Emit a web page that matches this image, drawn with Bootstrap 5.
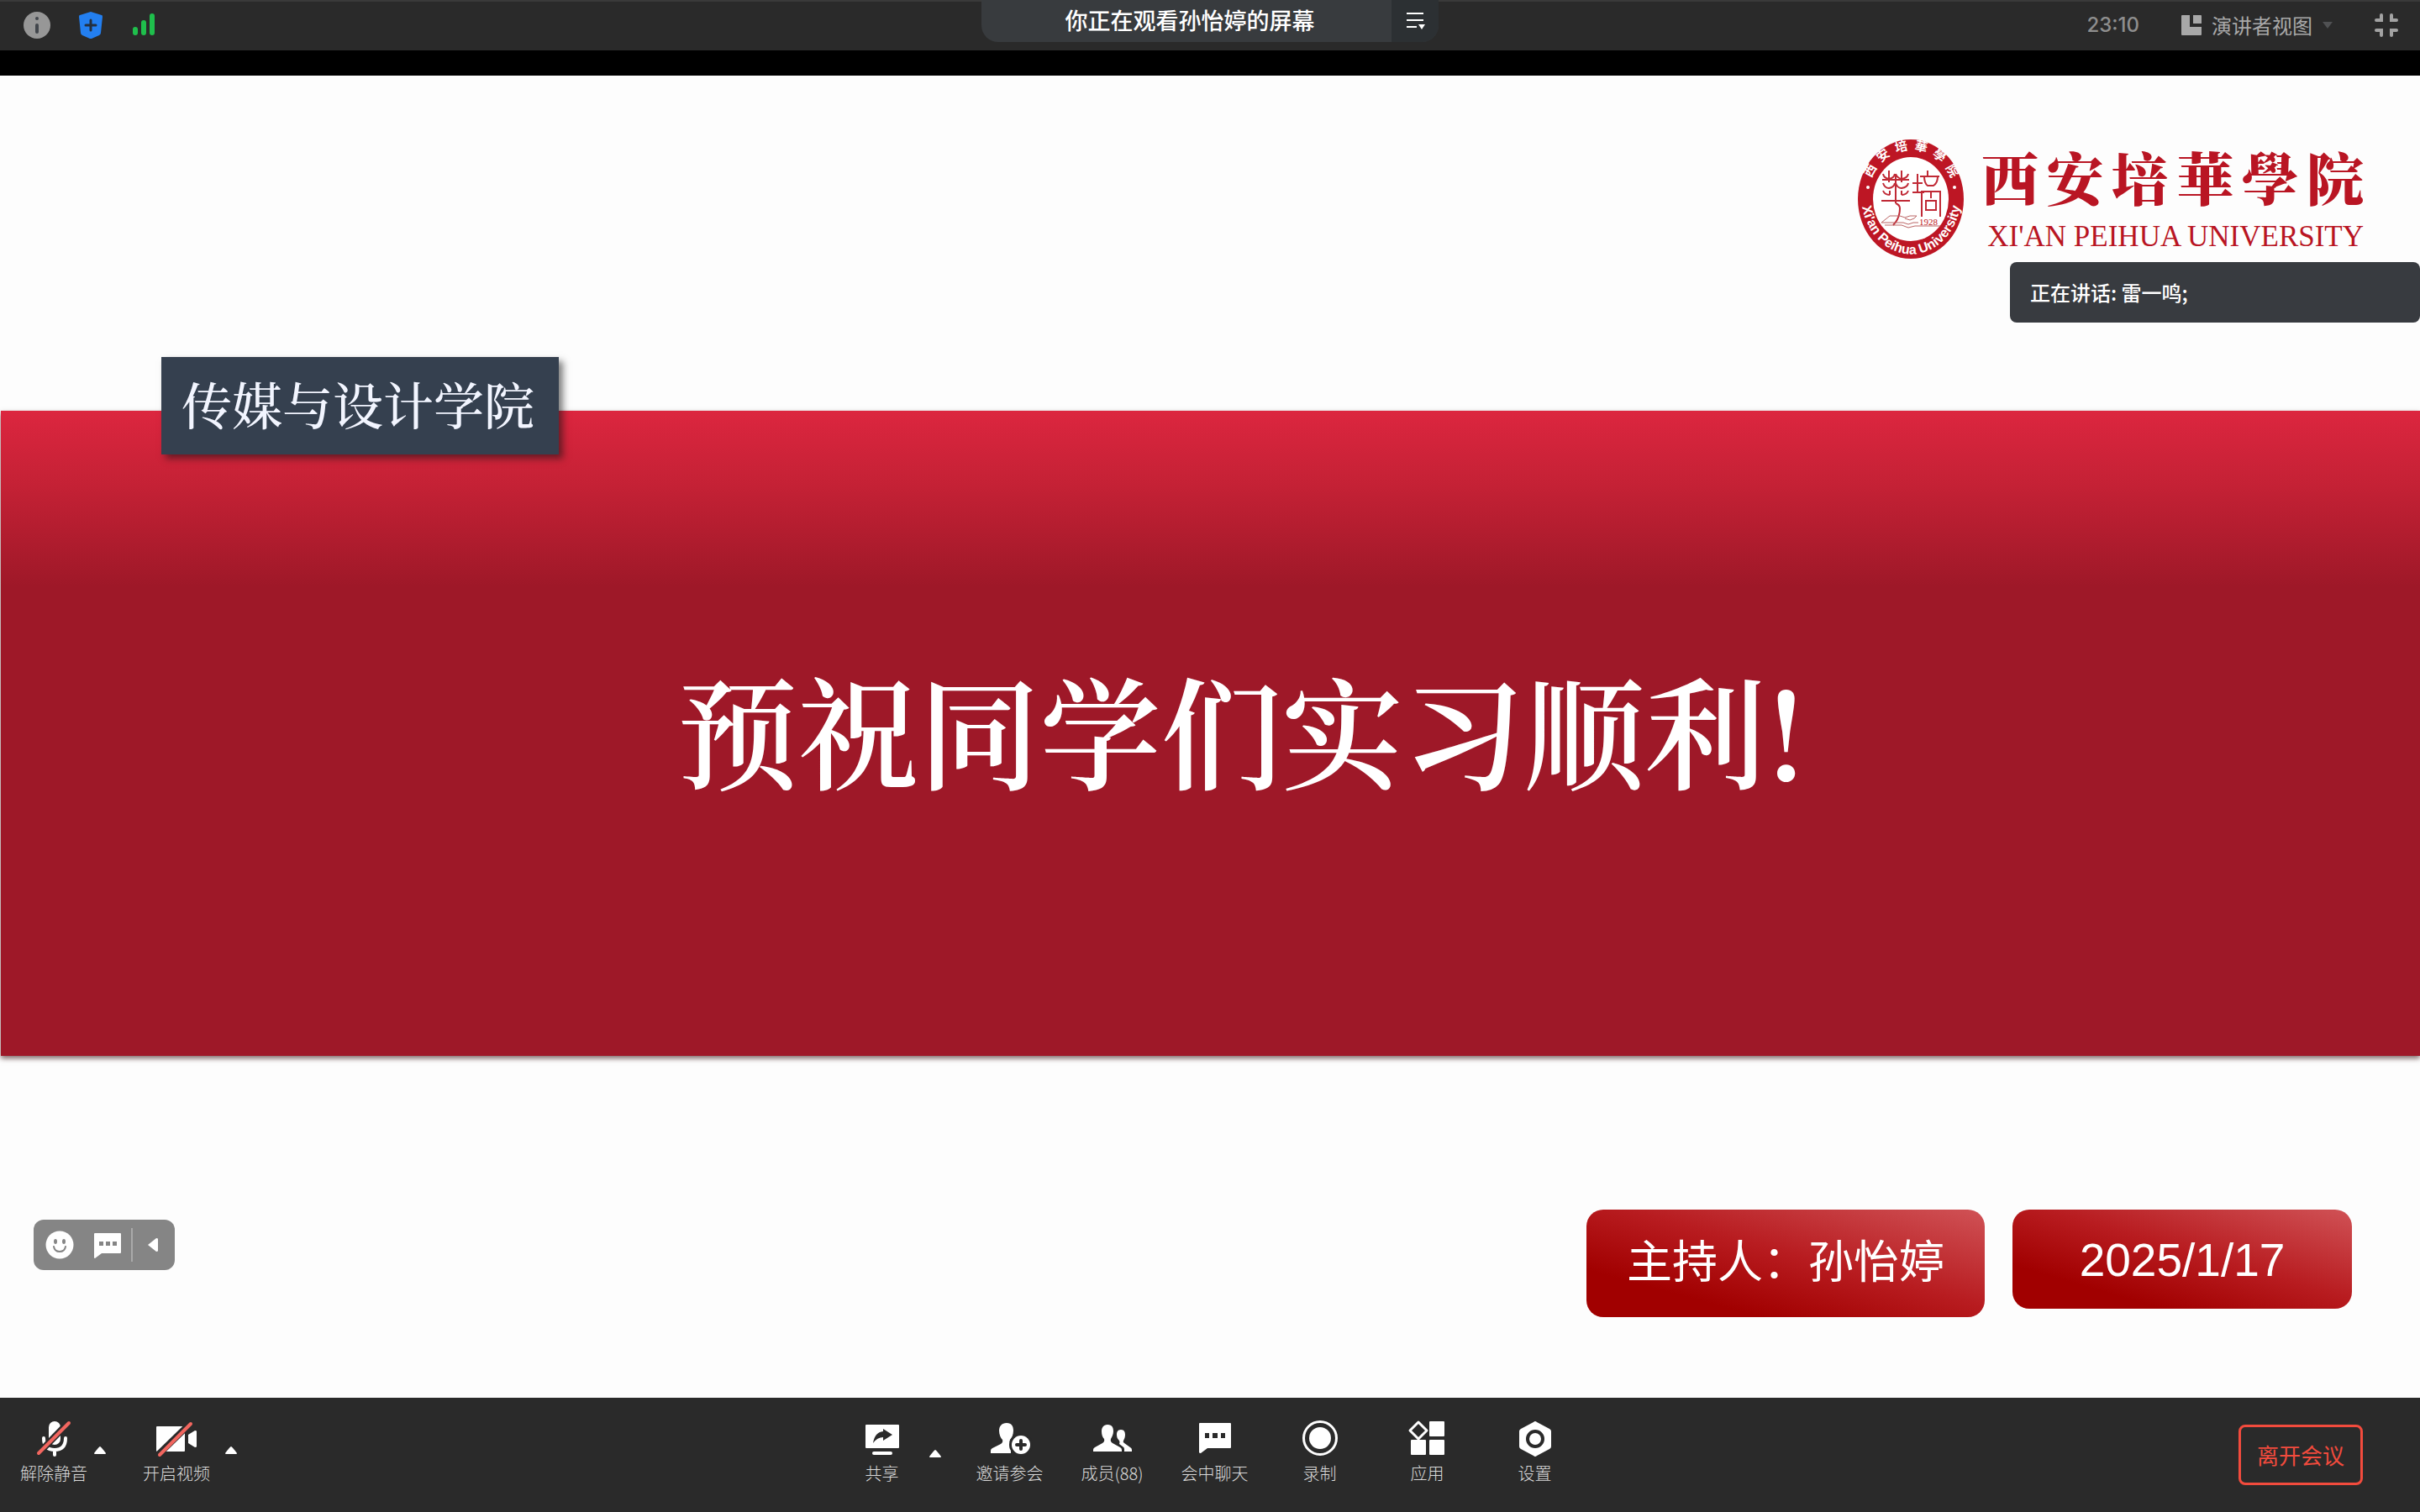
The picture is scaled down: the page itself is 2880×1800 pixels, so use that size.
<!DOCTYPE html>
<html lang="zh-CN">
<head>
<meta charset="utf-8">
<meta name="viewport" content="width=device-width, initial-scale=1">
<title>会议</title>
<link href="https://cdn.jsdelivr.net/npm/bootstrap@5.3.0/dist/css/bootstrap.min.css" rel="stylesheet">
<style>
  body { font-family: "Noto Sans CJK SC", sans-serif; background: #000; color: #fff; }
  svg { display: block; flex: none; overflow: visible; }
  button { background: none; border: 0; padding: 0; color: inherit; }

  .topbar { height: 60px; background: #2a2a2a; border-top: 2px solid #3a3a3a; padding: 0 26px 2px 28px; font-size: 24px; line-height: 32px; }
  .status-icons { gap: 34px; }
  .top-right { gap: 50px; color: #a8a8a8; }
  .clock { font-family: Inter, sans-serif; font-weight: 500; color: #8e8e8e; }
  .view-switch { gap: 12px; }
  .watching { top: -2px; left: 50%; transform: translateX(-50%); height: 50px; border-radius: 0 0 20px 20px; background: #383b3e; overflow: hidden; font-size: 27px; font-weight: 500; line-height: 48px; }
  .watching-name { width: 488px; padding-left: 8px; }
  .watching-menu { width: 56px; background: #2c3033; }

  .slide { margin-top: 30px; padding-top: 76px; background: #fdfdfd; }
  .school { padding-right: 67px; gap: 20px; color: #b91523; }
  .school-cn { font-family: "Noto Serif CJK SC", "Noto Sans CJK SC", serif; font-size: 68px; font-weight: 900; line-height: 80px; }
  .school-en { margin-top: 12px; font-family: "Liberation Serif", serif; font-size: 35px; line-height: 40px; text-align: right; }
  .school-names { width: 455px; padding-top: 4px; }
  .speaking { top: 222px; right: 0; width: 488px; height: 72px; padding-left: 24px; border-radius: 8px; background: #383b40; font-size: 24px; font-weight: 500; }
  .band { margin: 181px 0 0 1px; height: 768px; padding-left: 74px; background: linear-gradient(#dc263f 0, #c42135 90px, #9e1828 210px); box-shadow: 0 3px 6px rgba(40, 0, 0, .6); }
  .band h1 { font-family: "Noto Serif CJK SC", "Noto Sans CJK SC", serif; font-size: 144px; font-weight: 600; line-height: 184px; margin: 0 0 12px; }
  .college { top: -64px; left: 191px; width: 473px; height: 116px; padding: 0 0 6px 24px; background: #35404f; box-shadow: 5px 5px 8px rgba(20, 20, 20, .55); font-family: "Noto Serif CJK SC", "Noto Sans CJK SC", serif; font-size: 60px; font-weight: 500; color: #f2f5ff; }
  .plates { padding: 183px 81px 0 0; gap: 33px; font-size: 54px; line-height: 64px; }
  .plate { border-radius: 20px; background: linear-gradient(to top right, #a10000 22%, #b81c20 55%, #d05256 100%); }
  .plate-host { width: 474px; height: 128px; padding-bottom: 10px; }
  .plate-date { width: 404px; height: 118px; padding-top: 2px; font-family: "Liberation Sans", sans-serif; font-size: 55px; }
  .quick { left: 40px; bottom: 152px; height: 60px; border-radius: 12px; background: #858585; padding: 0 20px 0 14px; }
  .quick-chat { margin: 0 12px 0 24px; }
  .quick-line { width: 2px; height: 40px; margin-right: 18px; background: #a9a9a9; }

  .toolbar { display: grid; grid-template-columns: 1fr auto 1fr; background: #2a2a2a; padding: 24px 28px 32px 24px; }
  .tool { min-width: 80px; font-size: 20px; font-weight: 300; line-height: 24px; color: #dadada; gap: 6px; }
  .tool-short { min-width: 86px; }
  .tools-left { gap: 44px; }
  .tools-mid { gap: 42px; }
  .tools-right { padding: 8px 40px 0 0; }
  .with-menu { gap: 13px; }
  .mic-group { gap: 8px; }
  .cam-group { gap: 18px; }
  .leave { width: 148px; height: 72px; padding-bottom: 2px; border: 3px solid #f24b3d; border-radius: 8px; color: #f24b3d; font-size: 26px; }
</style>
</head>
<body>
<div class="d-flex flex-column min-vh-100">

  <header class="topbar position-relative d-flex align-items-center justify-content-between">
    <div class="status-icons d-flex align-items-center">
      <button type="button" aria-label="会议信息"><svg width="32" height="32"><circle cx="16" cy="16" r="16" fill="#979797"/><circle cx="16" cy="8" r="2" fill="#42464c"/><rect x="14" y="14" width="4" height="12" rx="2" fill="#42464c"/></svg></button>
      <button type="button" aria-label="安全"><svg width="28" height="32"><path d="M14 0 27 4Q28 4 28 6L26 25Q26 27 24 28L15 32H13L4 28Q2 27 2 25L0 6Q0 4 1 4Z" fill="#237ff0"/><path d="M14 10v12M8 16h12" stroke="#24303f" stroke-width="3" stroke-linecap="round"/></svg></button>
      <button type="button" aria-label="网络状态"><svg width="30" height="32" fill="#1fbf4c"><rect x="2" y="18" width="6" height="10" rx="3"/><rect x="12" y="10" width="6" height="18" rx="3"/><rect x="22" y="2" width="6" height="26" rx="3"/></svg></button>
    </div>
    <div class="top-right d-flex align-items-center">
      <span class="clock">23:10</span>
      <button type="button" class="view-switch d-flex align-items-center">
        <svg width="24" height="24" fill="#a8a8a8"><path d="M1 0H10V14H24V23Q24 24 23 24H1Q0 24 0 23V1Q0 0 1 0Z"/><path d="M14 0h9q1 0 1 1v9H14z"/></svg>
        <span>演讲者视图</span>
        <svg width="12" height="8"><path d="M0 0H12L6 8Z" fill="#505153"/></svg>
      </button>
      <button type="button" aria-label="退出全屏"><svg width="28" height="28" fill="none" stroke="#a2a2a2" stroke-width="4" stroke-linecap="round"><path d="M2 8H8V2M20 2V8H26M2 20H8V26M20 26V20H26"/></svg></button>
    </div>
    <div class="watching position-absolute d-flex">
      <div class="watching-name text-center">你正在观看孙怡婷的屏幕</div>
      <button type="button" class="watching-menu d-flex align-items-center justify-content-center" aria-label="更多"><svg width="20" height="20"><path d="M0 1H20M0 9H20M0 17H12" stroke="#fff" stroke-width="2"/><path d="M14 14H22L18 20Z" fill="#fff"/></svg></button>
    </div>
  </header>

  <main class="slide position-relative flex-grow-1">
    <div class="school d-flex justify-content-end">
      <svg width="127" height="142" viewBox="0 0 127 142" role="img" aria-label="西安培华学院校徽">
        <defs>
          <path id="ringTop" d="M11 71A52 58 0 0 1 116 71"/>
          <path id="ringBottom" d="M4 66A59 70 0 0 0 123 66"/>
        </defs>
        <ellipse cx="63" cy="71" rx="63" ry="71" fill="#bd1624"/>
        <ellipse cx="63" cy="71" rx="45" ry="50" fill="#fff"/>
        <g fill="#fff" font-weight="700" text-anchor="middle">
          <text font-family="Noto Sans CJK SC" font-size="15"><textPath href="#ringTop" startOffset="50%">西&#160; 安&#160; 培&#160; 華&#160; 學&#160; 院</textPath></text>
          <text font-family="Liberation Sans" font-size="16"><textPath href="#ringBottom" startOffset="50%">Xi'an Peihua University</textPath></text>
        </g>
        <circle cx="12" cy="57" r="2" fill="#fff"/><circle cx="115" cy="57" r="2" fill="#fff"/>
        <g fill="none" stroke="#c02a36" stroke-width="2">
          <path d="M29 48H61M37 37V51M52 37V51M30 41Q31 46 37 47Q43 46 44 41M45 41Q47 46 52 47Q59 46 60 41M30 52Q32 58 37 58Q43 57 44 52M45 52Q47 58 52 58Q59 57 60 52M45 42V76M30 61Q32 66 38 66M60 61Q58 66 52 66M38 61V66M52 61V66M28 73H62M45 76Q50 78 50 82Q50 94 42 102"/>
          <path d="M65 52H77M71 41V62M65 63H79M83 37V43M74 44H97M79 44Q79 52 83 55H90Q95 52 95 44M76 92V62H98V92M87 62V70M81 73H93V84H81Z"/>
        </g>
        <path d="M28 99 38 91H50L56 93 62 91H70L67 94 62 96 56 94M28 99H54L60 101 66 99H72M32 102H52L60 105 68 103H98" fill="none" stroke="#b66" stroke-width="1"/>
        <text x="84" y="102" font-family="Liberation Serif" font-size="11" text-anchor="middle" fill="#bd1624">1928</text>
      </svg>
      <div class="school-names">
        <div class="school-cn d-flex justify-content-between"><span>西</span><span>安</span><span>培</span><span>華</span><span>學</span><span>院</span></div>
        <div class="school-en">XI'AN PEIHUA UNIVERSITY</div>
      </div>
    </div>

    <section class="band position-relative d-flex align-items-center justify-content-center">
      <div class="college position-absolute d-flex align-items-center">传媒与设计学院</div>
      <h1>预祝同学们实习顺利!</h1>
    </section>

    <div class="plates d-flex justify-content-end align-items-start">
      <div class="plate plate-host d-flex align-items-center justify-content-center">主持人：孙怡婷</div>
      <div class="plate plate-date d-flex align-items-center justify-content-center">2025/1/17</div>
    </div>

    <div class="speaking position-absolute d-flex align-items-center">正在讲话: 雷一鸣;</div>

    <div class="quick position-absolute d-flex align-items-center">
      <button type="button" aria-label="表情"><svg width="34" height="34"><circle cx="17" cy="17" r="16.500" fill="#fff"/><ellipse cx="12" cy="13" rx="2" ry="3" fill="#858585"/><ellipse cx="22" cy="13" rx="2" ry="3" fill="#858585"/><path d="M10 19Q11 25 17 25Q23 25 24 19" fill="none" stroke="#858585" stroke-width="2" stroke-linecap="round"/></svg></button>
      <button type="button" class="quick-chat" aria-label="聊天"><svg width="32" height="28"><path d="M1 0H31Q32 0 32 1V23Q32 24 31 24H9L1 30Q0 30 0 29V1Q0 0 1 0Z" fill="#fff"/><path d="M6 10h5v5H6zM14 10h5v5H14zM22 10h5v5H22z" fill="#858585"/></svg></button>
      <span class="quick-line"></span>
      <button type="button" aria-label="收起"><svg width="12" height="16"><path d="M0 8 10 0Q12 0 12 1V15Q12 16 10 16Z" fill="#fff"/></svg></button>
    </div>
  </main>

  <footer class="toolbar">
    <div class="tools-left d-flex">
      <div class="mic-group d-flex">
        <button type="button" class="tool d-flex flex-column align-items-center">
          <svg width="48" height="48"><rect x="18" y="4" width="14" height="28" rx="7" fill="#fff"/><path d="M12 24Q12 38 25 38Q38 38 38 24M25 38V44" fill="none" stroke="#fff" stroke-width="4" stroke-linecap="round"/><path d="M6 42 42 5" stroke="#2a2a2a" stroke-width="8"/><path d="M6 42 42 6" stroke="#f2665f" stroke-width="4" stroke-linecap="round"/></svg>
          <span>解除静音</span>
        </button>
        <button type="button" class="align-self-start pt-4" aria-label="音频选项"><svg width="14" height="20"><path d="M7 10Q8 10 14 18Q14 19 13 19H1Q0 19 0 18Q6 10 7 10Z" fill="#fff"/></svg></button>
      </div>
      <div class="cam-group d-flex">
        <button type="button" class="tool d-flex flex-column align-items-center">
          <svg width="48" height="48"><rect x="0" y="10" width="34" height="30" rx="1" fill="#fff"/><path d="M38 20 46 15Q48 15 48 16V34Q48 35 46 35L38 30Z" fill="#fff"/><path d="M3 43 41 6" stroke="#2a2a2a" stroke-width="8"/><path d="M4 44 41 7" stroke="#f2665f" stroke-width="4" stroke-linecap="round"/></svg>
          <span>开启视频</span>
        </button>
        <button type="button" class="align-self-start pt-4" aria-label="视频选项"><svg width="14" height="20"><path d="M7 10Q8 10 14 18Q14 19 13 19H1Q0 19 0 18Q6 10 7 10Z" fill="#fff"/></svg></button>
      </div>
    </div>

    <div class="tools-mid d-flex">
      <div class="with-menu d-flex">
        <button type="button" class="tool tool-short d-flex flex-column align-items-center">
          <svg width="48" height="48"><rect x="4" y="8" width="40" height="28" rx="1" fill="#fff"/><rect x="12" y="40" width="24" height="4" rx="2" fill="#fff"/><path d="M13 30Q15 17 25 16V13L36 20 25 27V23Q18 23 13 30Z" fill="#2a2a2a"/></svg>
          <span>共享</span>
        </button>
        <button type="button" class="align-self-start pt-4" aria-label="共享选项"><svg width="14" height="24"><path d="M7 14Q8 14 14 22Q14 23 13 23H1Q0 23 0 22Q6 14 7 14Z" fill="#fff"/></svg></button>
      </div>
      <button type="button" class="tool d-flex flex-column align-items-center">
        <svg width="48" height="48"><path d="M20 6C26 6 28 10 28 15 28 20 26 24 24 26Q23 29 25 31L25 42H1V39Q1 37 3 36L13 31Q16 29 15 26C13 24 11 20 11 15 11 10 14 6 20 6Z" fill="#fff"/><circle cx="37" cy="32" r="14" fill="#2a2a2a"/><circle cx="37" cy="32" r="11" fill="#fff"/><path d="M37 27V37M32 32H42" stroke="#2a2a2a" stroke-width="4" stroke-linecap="round"/></svg>
        <span>邀请参会</span>
      </button>
      <button type="button" class="tool d-flex flex-column align-items-center">
        <svg width="48" height="48" fill="#fff"><path d="M18 8C24 8 25 12 25 16 25 20 23 23 22 25Q21 28 24 30L33 35Q35 36 35 38V40H1V38Q1 36 3 35L12 30Q15 28 14 25C12 23 11 20 11 16 11 12 13 8 18 8Z"/><path d="M34 14C38 14 39 17 39 20 39 23 38 25 37 27Q36 29 38 30L45 35Q47 36 47 38V40H38V37Q38 35 36 34L32 31Q33 29 32 27C30 25 29 23 29 20 29 17 30 14 34 14Z"/></svg>
        <span>成员(88)</span>
      </button>
      <button type="button" class="tool d-flex flex-column align-items-center">
        <svg width="48" height="48"><path d="M6 6H42Q43 6 43 7V35Q43 36 42 36H15L7 42Q5 42 5 41V7Q5 6 6 6Z" fill="#fff"/><path d="M12 18h5v6h-5zM21 18h6v6h-6zM31 18h5v6h-5z" fill="#2a2a2a"/></svg>
        <span>会中聊天</span>
      </button>
      <button type="button" class="tool tool-short d-flex flex-column align-items-center">
        <svg width="48" height="48"><circle cx="24" cy="24" r="19.500" fill="none" stroke="#fff" stroke-width="3"/><circle cx="24" cy="24" r="13" fill="#fff"/></svg>
        <span>录制</span>
      </button>
      <button type="button" class="tool tool-short d-flex flex-column align-items-center">
        <svg width="48" height="48" fill="#fff"><path d="M13 5 23 15 13 25 3 15Z" fill="none" stroke="#fff" stroke-width="3" stroke-linejoin="round"/><rect x="26" y="4" width="18" height="18" rx="1"/><rect x="4" y="26" width="18" height="18" rx="1"/><rect x="26" y="26" width="18" height="18" rx="1"/></svg>
        <span>应用</span>
      </button>
      <button type="button" class="tool tool-short d-flex flex-column align-items-center">
        <svg width="48" height="48"><path d="M22 5Q24 3 26 5L41 13Q43 14 43 16V34Q43 36 41 37L26 45Q24 47 22 45L7 37Q5 36 5 34V16Q5 14 7 13Z" fill="#fff"/><circle cx="24" cy="25" r="9" fill="#fff" stroke="#2a2a2a" stroke-width="4"/></svg>
        <span>设置</span>
      </button>
    </div>

    <div class="tools-right d-flex justify-content-end align-items-start">
      <button type="button" class="leave">离开会议</button>
    </div>
  </footer>
</div>
<script src="https://cdn.jsdelivr.net/npm/bootstrap@5.3.0/dist/js/bootstrap.bundle.min.js"></script>
</body>
</html>
